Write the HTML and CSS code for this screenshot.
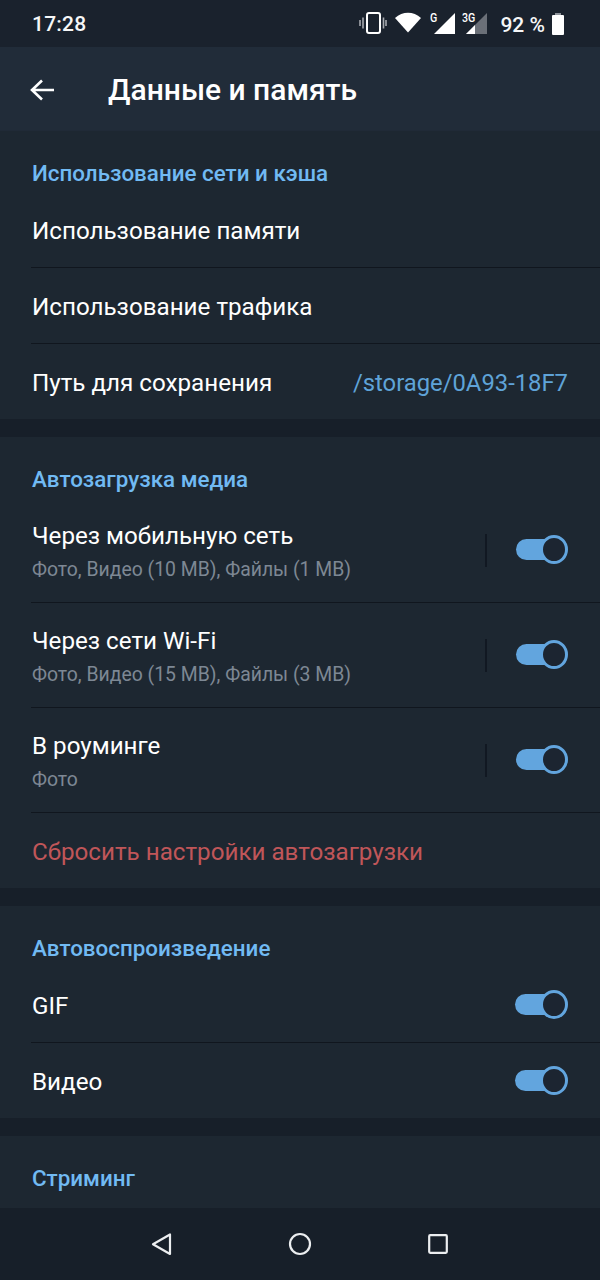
FILE: index.html
```html
<!DOCTYPE html>
<html lang="ru">
<head>
<meta charset="utf-8">
<title>Данные и память</title>
<link rel="stylesheet" href="styles.css">
</head>
<body>
<div class="screen">
  <div class="status">
    <span class="time">17:28</span>
    <div class="status-icons">
      <svg class="i-vib" width="30" height="24" viewBox="0 0 30 24"><rect x="10" y="2" width="13" height="20" rx="2" fill="none" stroke="#fff" stroke-width="2"/><path d="M6 6.500v11M3 9v6M26.500 6.500v11M29 9v6" stroke="#a5a9ae" stroke-width="1.600" fill="none"/></svg>
      <svg class="i-wifi" width="28" height="22" viewBox="0 0 28 22"><path d="M1 7C8.500 0 19.500 0 27 7L14 21.500Z" fill="#fff"/></svg>
      <div class="sig">
        <span class="sig-l sig-g">G</span>
        <svg width="22" height="22" viewBox="0 0 22 22"><path d="M0 22L21 1V22Z" fill="#fff"/></svg>
      </div>
      <div class="sig sig2">
        <span class="sig-l sig-3g">3G</span>
        <svg width="22" height="22" viewBox="0 0 22 22"><path d="M0 22L21 1V22Z" fill="#6b7078"/><path d="M0 22L9 13V22Z" fill="#fff"/></svg>
      </div>
      <span class="pct">92 %</span>
      <svg class="i-bat" width="12" height="22" viewBox="0 0 12 22"><path d="M3.500 0h5v2h2.500a1 1 0 0 1 1 1v18a1 1 0 0 1-1 1h-10a1 1 0 0 1-1-1v-18a1 1 0 0 1 1-1h2.500Z" fill="#fff"/><path d="M3.500 0h5v2h-5Z" fill="#8d939a"/></svg>
    </div>
  </div>

  <header class="appbar">
    <svg class="back" width="26" height="24" viewBox="0 0 26 24"><path d="M25 12H3M13 2.500L3 12l10 9.500" fill="none" stroke="#fff" stroke-width="2.600"/></svg>
    <h1 class="title">Данные и память</h1>
  </header>

  <section class="card first">
    <h2 class="head">Использование сети и кэша</h2>
    <div class="row div"><span class="label">Использование памяти</span></div>
    <div class="row div"><span class="label">Использование трафика</span></div>
    <div class="row end"><span class="label">Путь для сохранения</span><span class="value">/storage/0A93-18F7</span></div>
  </section>

  <section class="card">
    <h2 class="head">Автозагрузка медиа</h2>
    <div class="row tall div">
      <div class="stack"><span class="label">Через мобильную сеть</span><span class="sub">Фото, Видео (10 MB), Файлы (1 MB)</span></div>
      <span class="sep"></span><span class="toggle"></span>
    </div>
    <div class="row tall div">
      <div class="stack"><span class="label">Через сети Wi-Fi</span><span class="sub">Фото, Видео (15 MB), Файлы (3 MB)</span></div>
      <span class="sep"></span><span class="toggle"></span>
    </div>
    <div class="row tall div">
      <div class="stack"><span class="label">В роуминге</span><span class="sub">Фото</span></div>
      <span class="sep"></span><span class="toggle"></span>
    </div>
    <div class="row end"><span class="label danger">Сбросить настройки автозагрузки</span></div>
  </section>

  <section class="card">
    <h2 class="head">Автовоспроизведение</h2>
    <div class="row div"><span class="label">GIF</span><span class="toggle plain"></span></div>
    <div class="row end"><span class="label">Видео</span><span class="toggle plain"></span></div>
  </section>

  <section class="card last">
    <h2 class="head">Стриминг</h2>
  </section>

  <nav class="navbar">
    <svg width="24" height="24" viewBox="0 0 24 24"><path d="M20 2.500V22L3 12.200Z" fill="none" stroke="#eceef0" stroke-width="2.200" stroke-linejoin="round"/></svg>
    <svg width="24" height="24" viewBox="0 0 24 24"><circle cx="12" cy="12" r="10" fill="none" stroke="#eceef0" stroke-width="2.200"/></svg>
    <svg width="24" height="24" viewBox="0 0 24 24"><rect x="3.200" y="3.200" width="17.600" height="17.600" rx="1" fill="none" stroke="#eceef0" stroke-width="2.200"/></svg>
  </nav>
</div>
</body>
</html>
```
FILE: styles.css
```css
*, *::before, *::after { box-sizing: border-box; }
html, body { margin: 0; padding: 0; }
body { background: #171f29; font-family: Roboto, "Noto Sans", sans-serif; color: #fff; }
.screen { width: 600px; height: 1280px; overflow: hidden; display: flex; flex-direction: column; background: #171f29; }

.status { height: 47px; flex: none; display: flex; align-items: center; justify-content: space-between; padding: 0 36px 0 32px; background: #1a222d; }
.time { font-size: 21px; font-weight: 500; color: #f6f7f8; letter-spacing: .2px; }
.status-icons { display: flex; align-items: center; }
.status-icons svg { display: block; }
.i-vib { margin-bottom: 2px; }
.i-wifi { margin: 0 0 4px 7px; }
.sig { position: relative; width: 22px; height: 22px; margin: 0 0 2px 12px; }
.sig2 { margin-left: 10px; }
.sig-l { position: absolute; top: 0; font-size: 12.500px; font-weight: 500; line-height: 12px; color: #fff; transform: scaleX(.85); transform-origin: 0 0; }
.sig-g { left: -4.500px; }
.sig-3g { left: -4px; }
.pct { font-size: 21px; font-weight: 500; margin: 2px 0 0 12px; color: #f6f7f8; }
.i-bat { margin-left: 7px; }

.appbar { height: 84px; flex: none; display: flex; align-items: center; padding: 2px 0 0 29px; background: #212c39; border-bottom: 1px solid #202a37; }
.title { margin: 0 0 0 53px; font-size: 30px; font-weight: 500; color: #fff; }
.back { flex: none; }

.card { flex: none; background: #1d2731; margin-bottom: 18px; }
.head { margin: 0; height: 61px; padding: 29px 32px 0; font-size: 22.4px; line-height: 26px; font-weight: 500; color: #71baf3; }
.row { height: 76px; display: flex; align-items: center; margin-left: 32px; padding-right: 32px; }
.row.end { height: 75px; }
.row.div { border-bottom: 1px solid #10161e; margin-left: 31px; padding-left: 1px; }
.row.tall { height: 105px; }
.label { font-size: 24.2px; color: #fff; flex: 1; padding-top: 3px; }
.value { font-size: 23.800px; color: #5fa3d8; padding-top: 3px; }
.danger { color: #c05659; }
.stack { flex: 1; display: flex; flex-direction: column; gap: 9px; padding-top: 4px; }
.sub { font-size: 19.4px; line-height: 22px; color: #7d8894; }
.stack .label { flex: none; line-height: 27px; padding-top: 0; }
.sep { width: 2px; height: 33px; background: #111822; margin-right: 29px; flex: none; }

.toggle { position: relative; flex: none; width: 52px; height: 29px; margin-bottom: 1px; }
.toggle::before { content: ""; position: absolute; left: 0; right: 12px; top: 4px; height: 21px; border-radius: 11px; background: #62a5de; }
.toggle::after { content: ""; position: absolute; right: 0; top: 0; width: 28px; height: 29px; border-radius: 50%; background: #1c2531; border: 3px solid #62a5de; }
.toggle.plain { width: 53px; margin-bottom: 0; }

.last { margin-bottom: 0; height: 72px; }
.navbar { flex: 1; display: flex; align-items: center; justify-content: space-between; padding: 0 150px; background: #171f29; }
.navbar svg { display: block; }
```
